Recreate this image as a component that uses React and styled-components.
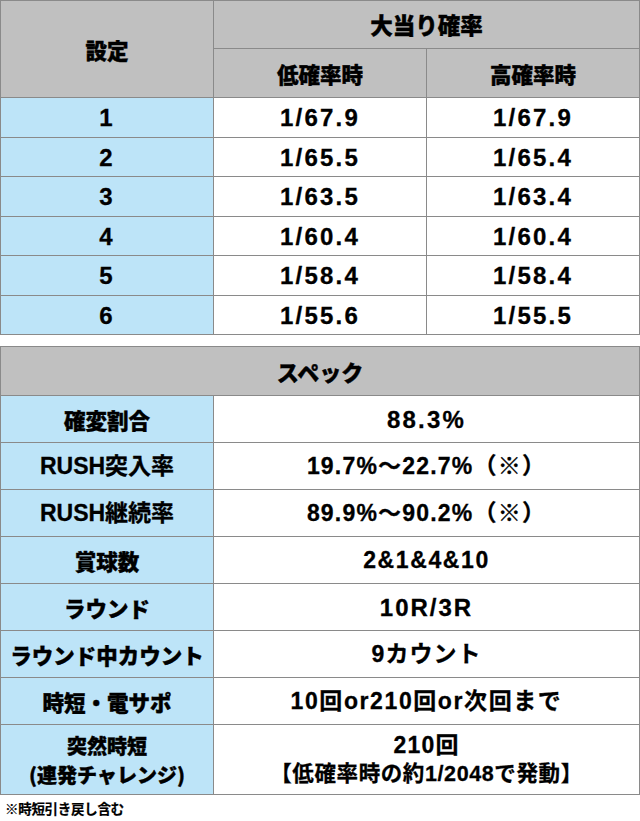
import React from 'react';
import styled, { createGlobalStyle } from 'styled-components';

const GlobalStyle = createGlobalStyle`
  html, body {
    margin: 0;
    padding: 0;
    background: #ffffff;
  }
  body {
    font-family: "Liberation Sans", "Noto Sans CJK JP", sans-serif;
    color: #000;
  }
`;

const probRows = [
  ['1', '1/67.9', '1/67.9'],
  ['2', '1/65.5', '1/65.4'],
  ['3', '1/63.5', '1/63.4'],
  ['4', '1/60.4', '1/60.4'],
  ['5', '1/58.4', '1/58.4'],
  ['6', '1/55.6', '1/55.5'],
];

// value: [text, size, spacing]
const specRows = [
  ['確変割合', ['88.3%', 24, 2.2]],
  ['RUSH突入率', ['19.7%〜22.7%（※）', 23, 1.2]],
  ['RUSH継続率', ['89.9%〜90.2%（※）', 23, 1.2]],
  ['賞球数', ['2&1&4&10', 23, 1.6]],
  ['ラウンド', ['10R/3R', 24, 2]],
  ['ラウンド中カウント', ['9カウント', 23, 1]],
  ['時短・電サポ', ['10回or210回or次回まで', 23, 1.6]],
];

const Page = styled.div`
  width: 640px;
  display: flex;
  flex-direction: column;
`;

const Grid = styled.div`
  display: grid;
  grid-template-columns: ${p => p.cols};
  grid-template-rows: ${p => p.rows};
  gap: 1px;
  padding: 1px;
  background: #8a8a8a;
  margin-bottom: ${p => p.mb || 0}px;
`;

const Cell = styled.div`
  display: flex;
  flex-direction: column;
  align-items: center;
  justify-content: center;
  text-align: center;
  background: ${p => (p.kind === 'head' ? '#c0c0c0' : p.kind === 'label' ? '#bde4f8' : '#ffffff')};
  grid-column: ${p => p.span || 'auto'};
  grid-row: ${p => p.rspan || 'auto'};
  font-family: "Noto Sans CJK JP", sans-serif;
  font-weight: 900;
  font-size: ${p => p.size || 21.5}px;
  line-height: ${p => p.lh || 27}px;
  -webkit-text-stroke: 0.4px #000;
`;

const Num = styled.span`
  font-family: "Liberation Sans", "Noto Sans CJK JP", sans-serif;
  font-weight: 700;
  font-size: ${p => p.size || 24}px;
  letter-spacing: ${p => (p.ls === undefined ? 2.2 : p.ls)}px;
  line-height: ${p => p.lh || 27}px;
  -webkit-text-stroke: 0.3px #000;
`;

const Note = styled.div`
  font-family: "Noto Sans CJK JP", sans-serif;
  font-weight: 700;
  font-size: 13.5px;
  padding: 3px 0 0 5px;
  letter-spacing: -0.3px;
  -webkit-text-stroke: 0.2px #000;
`;

export default function App() {
  return (
    <Page>
      <GlobalStyle />
      <Grid
        cols="212px 212px 212px"
        rows="47px 48px 39px 38px 39px 38px 39px 38px"
        mb={11}
      >
        <Cell kind="head" rspan="1 / span 2">設定</Cell>
        <Cell kind="head" span="2 / span 2" size={22.5}>大当り確率</Cell>
        <Cell kind="head">低確率時</Cell>
        <Cell kind="head">高確率時</Cell>
        {probRows.map(r => (
          <React.Fragment key={r[0]}>
            <Cell kind="label"><Num>{r[0]}</Num></Cell>
            <Cell><Num>{r[1]}</Num></Cell>
            <Cell><Num>{r[2]}</Num></Cell>
          </React.Fragment>
        ))}
      </Grid>
      <Grid cols="212px 425px" rows="48px repeat(7, 46px) 69px">
        <Cell kind="head" span="1 / span 2" size={22}>スペック</Cell>
        {specRows.map(([label, [val, size, ls]]) => (
          <React.Fragment key={label}>
            <Cell kind="label">
              {label.startsWith('RUSH') ? <Num size={23} ls={0}>{label}</Num> : label}
            </Cell>
            <Cell><Num size={size} ls={ls}>{val}</Num></Cell>
          </React.Fragment>
        ))}
        <Cell kind="label" size={20} lh={29}>
          <span>突然時短</span>
          <span>(連発チャレンジ)</span>
        </Cell>
        <Cell>
          <Num size={23} ls={1.2} lh={29}>210回</Num>
          <Num size={21.5} ls={0.6} lh={29}>【低確率時の約1/2048で発動】</Num>
        </Cell>
      </Grid>
      <Note>※時短引き戻し含む</Note>
    </Page>
  );
}
